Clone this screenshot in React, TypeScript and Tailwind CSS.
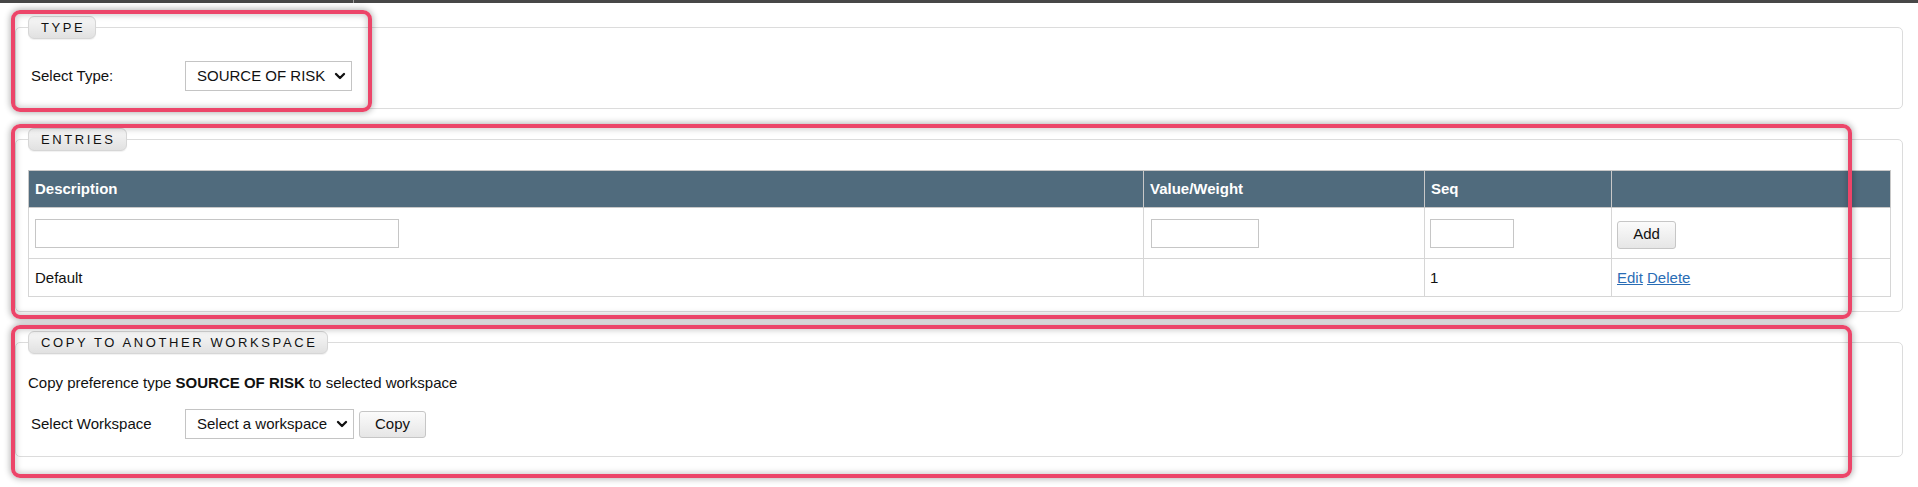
import { ChevronDown } from "lucide-react";
import type { ReactNode } from "react";

function Legend({ children }: { children: ReactNode }) {
  return (
    <legend className="h-[23px] rounded-[6px] border border-[#d6d6d6] bg-gradient-to-b from-[#f7f7f7] to-[#e1e1e1] pl-[12px] pr-[10px] text-[13px] leading-[21px] tracking-[2.6px] text-[#111] shadow-[0_1px_1px_rgba(0,0,0,0.06)]">
      {children}
    </legend>
  );
}

function Select({ value, width }: { value: string; width: string }) {
  return (
    <div className={`relative h-[30px] ${width}`}>
      <select className="h-full w-full appearance-none border border-[#c4c4c4] bg-white pl-[11px] text-[15px] text-[#111] outline-none">
        <option>{value}</option>
      </select>
      <ChevronDown
        className="pointer-events-none absolute right-[4px] top-[7px] h-[16px] w-[16px] text-[#111]"
        strokeWidth={3.5}
      />
    </div>
  );
}

function Highlight({ className }: { className: string }) {
  return (
    <div
      className={`pointer-events-none absolute rounded-[9px] border-[4px] border-[#ec4569] shadow-[0_0_6px_1px_rgba(0,0,0,0.3),inset_0_0_6px_1px_rgba(0,0,0,0.22)] ${className}`}
    />
  );
}

export default function App() {
  return (
    <div className="relative min-h-[487px] bg-white font-['Liberation_Sans',Arial,sans-serif] text-[15px] text-[#111]">
      {/* top bar */}
      <div className="flex h-[3px]">
        <div className="w-[353px] bg-[#474747]" />
        <div className="w-px bg-[#9d9d9d]" />
        <div className="flex-1 bg-[#474747]" />
      </div>

      <div className="px-[15px]">
        {/* TYPE */}
        <fieldset className="mt-[13px] rounded-[5px] border border-[#dcdcdc] px-[12px] pb-[17px] pt-[22px]">
          <Legend>TYPE</Legend>
          <div className="flex h-[30px] items-center">
            <span className="w-[157px] pl-[3px]">Select Type:</span>
            <Select value="SOURCE OF RISK" width="w-[167px]" />
          </div>
        </fieldset>

        {/* ENTRIES */}
        <fieldset className="mt-[19px] rounded-[5px] border border-[#dcdcdc] pl-[12px] pr-[11px] pb-[14px] pt-[19px]">
          <Legend>ENTRIES</Legend>
          <table className="w-full table-fixed border-collapse border border-[#d4d4d4]">
            <colgroup>
              <col className="w-[1115px]" />
              <col className="w-[281px]" />
              <col className="w-[187px]" />
              <col />
            </colgroup>
            <thead>
              <tr className="h-[37px] bg-[#506b7d] text-left font-bold text-white">
                <th className="border border-[#c8c8c8] px-[6px]">Description</th>
                <th className="border border-[#c8c8c8] px-[6px]">Value/Weight</th>
                <th className="border border-[#c8c8c8] px-[6px]">Seq</th>
                <th className="border border-[#c8c8c8] px-[6px]" />
              </tr>
            </thead>
            <tbody>
              <tr className="h-[51px]">
                <td className="border border-[#d6d6d6] px-[6px]">
                  <input className="block h-[29px] w-[364px] border border-[#c6c6c6] outline-none" />
                </td>
                <td className="border border-[#d6d6d6] px-[7px]">
                  <input className="block h-[29px] w-[108px] border border-[#c6c6c6] outline-none" />
                </td>
                <td className="border border-[#d6d6d6] px-[5px]">
                  <input className="block h-[29px] w-[84px] border border-[#c6c6c6] outline-none" />
                </td>
                <td className="border border-[#d6d6d6] px-[5px]">
                  <button
                    type="button"
                    className="mt-[3px] h-[28px] w-[59px] rounded-[3px] border border-[#c6c6c6] bg-gradient-to-b from-[#fbfbfb] to-[#e6e6e6] text-[15px] text-[#111]"
                  >
                    Add
                  </button>
                </td>
              </tr>
              <tr className="h-[38px]">
                <td className="border border-[#d6d6d6] px-[6px] pt-[1px]">Default</td>
                <td className="border border-[#d6d6d6] px-[6px]" />
                <td className="border border-[#d6d6d6] px-[5px] pt-[1px]">1</td>
                <td className="border border-[#d6d6d6] px-[5px] pt-[1px] text-[#2a6db5]">
                  <a className="underline">Edit</a> <a className="underline">Delete</a>
                </td>
              </tr>
            </tbody>
          </table>
        </fieldset>

        {/* COPY */}
        <fieldset className="mt-[19px] rounded-[5px] border border-[#dcdcdc] px-[12px] pb-[17px] pt-[20px]">
          <Legend>COPY TO ANOTHER WORKSPACE</Legend>
          <p className="leading-[17px]">
            Copy preference type <b>SOURCE OF RISK</b> to selected workspace
          </p>
          <div className="mt-[18px] flex h-[30px] items-center">
            <span className="w-[157px] pl-[3px]">Select Workspace</span>
            <Select value="Select a workspace" width="w-[169px]" />
            <button
              type="button"
              className="ml-[5px] h-[27px] w-[67px] rounded-[3px] border border-[#c6c6c6] bg-gradient-to-b from-[#fbfbfb] to-[#e6e6e6] text-[15px] text-[#111]"
            >
              Copy
            </button>
          </div>
        </fieldset>
      </div>

      {/* review highlights */}
      <Highlight className="left-[11px] top-[10px] h-[102px] w-[361px]" />
      <Highlight className="left-[11px] top-[124px] h-[195px] w-[1841px]" />
      <Highlight className="left-[11px] top-[325px] h-[153px] w-[1841px]" />
    </div>
  );
}
